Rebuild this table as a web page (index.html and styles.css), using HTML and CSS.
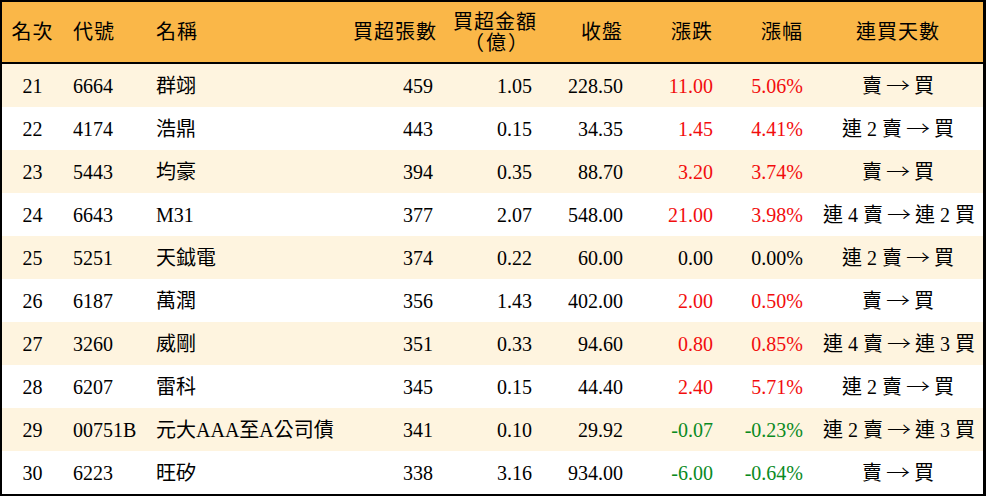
FILE: index.html
```html
<!DOCTYPE html>
<html lang="zh-Hant">
<head>
<meta charset="utf-8">
<title>買超排行</title>
<link rel="stylesheet" href="styles.css">
</head>
<body>
<table class="rank">
  <colgroup>
    <col class="c-rank"><col class="c-code"><col class="c-name"><col class="c-vol"><col class="c-amt"><col class="c-close"><col class="c-chg"><col class="c-pct"><col class="c-days">
  </colgroup>
  <thead>
    <tr>
      <th class="ctr">名次</th>
      <th class="lft">代號</th>
      <th class="lft">名稱</th>
      <th class="rgt">買超張數</th>
      <th class="rgt two">買超金額<br><span class="unit">（億）</span></th>
      <th class="rgt">收盤</th>
      <th class="rgt">漲跌</th>
      <th class="rgt">漲幅</th>
      <th class="ctr">連買天數</th>
    </tr>
  </thead>
  <tbody>
    <tr><td class="ctr">21</td><td class="lft">6664</td><td class="lft">群翊</td><td class="rgt">459</td><td class="rgt">1.05</td><td class="rgt">228.50</td><td class="rgt up">11.00</td><td class="rgt up">5.06%</td><td class="ctr">賣 <span class="arr">→</span> 買</td></tr>
    <tr><td class="ctr">22</td><td class="lft">4174</td><td class="lft">浩鼎</td><td class="rgt">443</td><td class="rgt">0.15</td><td class="rgt">34.35</td><td class="rgt up">1.45</td><td class="rgt up">4.41%</td><td class="ctr">連 2 賣 <span class="arr">→</span> 買</td></tr>
    <tr><td class="ctr">23</td><td class="lft">5443</td><td class="lft">均豪</td><td class="rgt">394</td><td class="rgt">0.35</td><td class="rgt">88.70</td><td class="rgt up">3.20</td><td class="rgt up">3.74%</td><td class="ctr">賣 <span class="arr">→</span> 買</td></tr>
    <tr><td class="ctr">24</td><td class="lft">6643</td><td class="lft">M31</td><td class="rgt">377</td><td class="rgt">2.07</td><td class="rgt">548.00</td><td class="rgt up">21.00</td><td class="rgt up">3.98%</td><td class="ctr">連 4 賣 <span class="arr">→</span> 連 2 買</td></tr>
    <tr><td class="ctr">25</td><td class="lft">5251</td><td class="lft">天鉞電</td><td class="rgt">374</td><td class="rgt">0.22</td><td class="rgt">60.00</td><td class="rgt">0.00</td><td class="rgt">0.00%</td><td class="ctr">連 2 賣 <span class="arr">→</span> 買</td></tr>
    <tr><td class="ctr">26</td><td class="lft">6187</td><td class="lft">萬潤</td><td class="rgt">356</td><td class="rgt">1.43</td><td class="rgt">402.00</td><td class="rgt up">2.00</td><td class="rgt up">0.50%</td><td class="ctr">賣 <span class="arr">→</span> 買</td></tr>
    <tr><td class="ctr">27</td><td class="lft">3260</td><td class="lft">威剛</td><td class="rgt">351</td><td class="rgt">0.33</td><td class="rgt">94.60</td><td class="rgt up">0.80</td><td class="rgt up">0.85%</td><td class="ctr">連 4 賣 <span class="arr">→</span> 連 3 買</td></tr>
    <tr><td class="ctr">28</td><td class="lft">6207</td><td class="lft">雷科</td><td class="rgt">345</td><td class="rgt">0.15</td><td class="rgt">44.40</td><td class="rgt up">2.40</td><td class="rgt up">5.71%</td><td class="ctr">連 2 賣 <span class="arr">→</span> 買</td></tr>
    <tr><td class="ctr">29</td><td class="lft">00751B</td><td class="lft">元大AAA至A公司債</td><td class="rgt">341</td><td class="rgt">0.10</td><td class="rgt">29.92</td><td class="rgt down">-0.07</td><td class="rgt down">-0.23%</td><td class="ctr">連 2 賣 <span class="arr">→</span> 連 3 買</td></tr>
    <tr><td class="ctr">30</td><td class="lft">6223</td><td class="lft">旺矽</td><td class="rgt">338</td><td class="rgt">3.16</td><td class="rgt">934.00</td><td class="rgt down">-6.00</td><td class="rgt down">-0.64%</td><td class="ctr">賣 <span class="arr">→</span> 買</td></tr>
  </tbody>
</table>
</body>
</html>
```

FILE: styles.css
```css
html, body {
  margin: 0;
  padding: 0;
  background: #ffffff;
}

.rank {
  table-layout: fixed;
  border-collapse: separate;
  border-spacing: 0;
  width: 986px;
  border-style: solid;
  border-color: #000;
  border-width: 2px 3px 3px 2px;
  font-family: "Liberation Serif", "Noto Sans CJK TC", serif;
  font-size: 20px;
  color: #000;
}

.c-rank { width: 61px; }
.c-code { width: 83px; }
.c-name { width: 197px; }
.c-vol { width: 100px; }
.c-amt { width: 99px; }
.c-close { width: 91px; }
.c-chg { width: 90px; }
.c-pct { width: 90px; }
.c-days { width: 170px; }

.rank th {
  height: 59px;
  padding: 0 10px;
  background: #fab748;
  font-weight: normal;
  letter-spacing: 1px;
  line-height: 21px;
  border-bottom: 2px solid #000;
  white-space: nowrap;
}

.rank th.two {
  padding-top: 1px;
}

.unit {
  letter-spacing: 2px;
  margin-right: 2px;
}

.rank td {
  height: 43px;
  padding: 0 10px;
  line-height: 24px;
  white-space: nowrap;
  vertical-align: middle;
}

.arr {
  font-family: "Noto Sans CJK TC", sans-serif;
  font-weight: 300;
  display: inline-block;
  margin: 0 1px;
  transform: scaleX(1.2);
}

.rank tbody tr:nth-child(odd) td {
  background: #fef4df;
}

.ctr { text-align: center; }
.lft { text-align: left; }
.rgt { text-align: right; }

.rank td.ctr:first-child,
.rank th.ctr:first-child {
  padding: 0;
}

.up { color: #f20d0d; }
.down { color: #0a8a1e; }
```
